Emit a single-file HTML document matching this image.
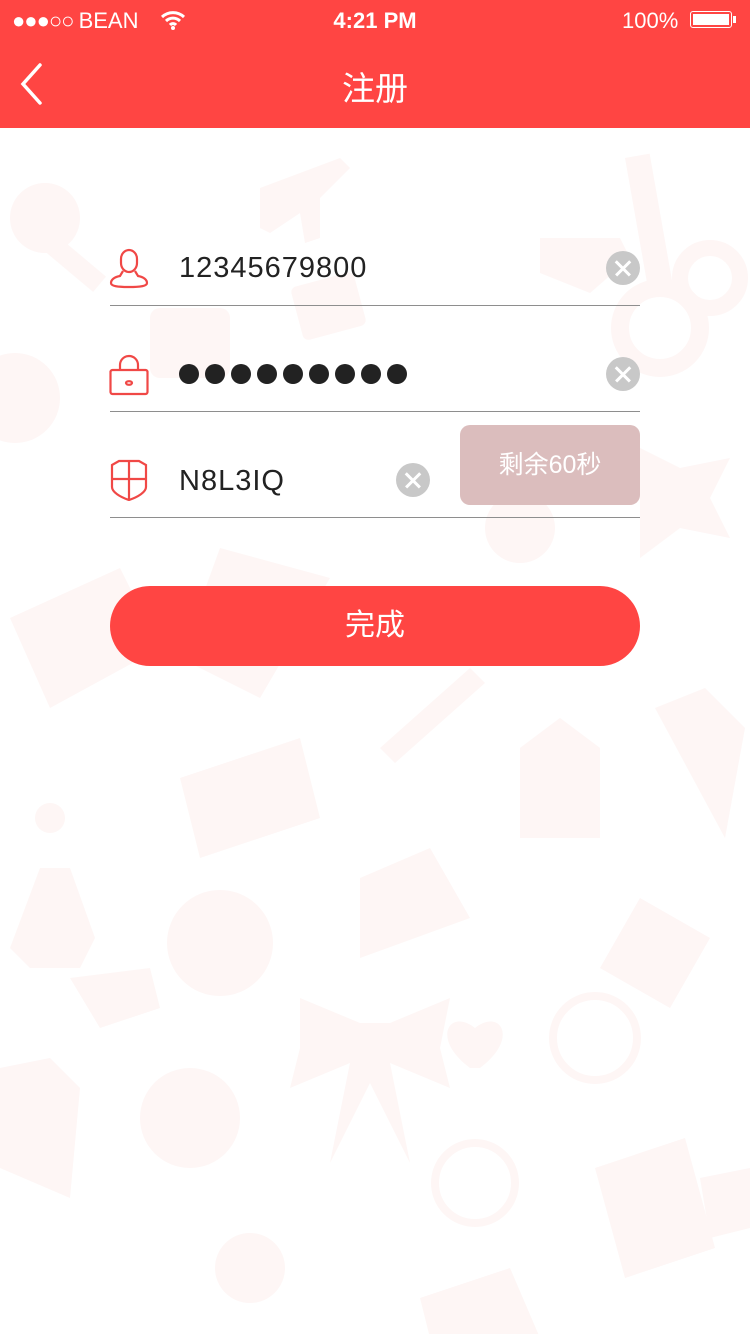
<!DOCTYPE html>
<html><head><meta charset="utf-8"><style>
body{margin:0;width:750px;height:1334px;overflow:hidden;background:#fff;font-family:"Liberation Sans","Noto Sans CJK SC",sans-serif;position:relative}
.hdr{position:absolute;left:0;top:0;width:750px;height:128px;background:#ff4543;color:#fff}
.bg{position:absolute;left:0;top:128px}
.line{position:absolute;left:110px;width:530px;height:1px;background:#8e8e8e}
.txt{position:absolute;font-size:29px;color:#222;letter-spacing:1px}
.clr{position:absolute;width:34px;height:34px;border-radius:50%;background:#c8c8c8}
.clr:before,.clr:after{content:"";position:absolute;left:7px;top:16px;width:20px;height:2.5px;background:#fff;transform:rotate(45deg)}
.clr:after{transform:rotate(-45deg)}
</style></head><body>
<svg class="bg" width="750" height="1206" fill="#fef6f5">
<circle cx="45" cy="90" r="35"/><rect x="60" y="110" width="60" height="20" transform="rotate(40 60 110)"/>
<path d="M260 60l80-30 10 10-30 30 0 40-15 5-5-30-30 20-10-5z"/>
<path d="M540 110h80l10 20-40 35-50-20z"/><circle cx="660" cy="200" r="40" fill="none" stroke="#fef6f5" stroke-width="18"/><circle cx="710" cy="150" r="30" fill="none" stroke="#fef6f5" stroke-width="16"/>
<rect x="625" y="30" width="25" height="140" transform="rotate(-10 625 30)"/>
<circle cx="15" cy="270" r="45"/><rect x="150" y="180" width="80" height="70" rx="10"/>
<rect x="290" y="160" width="65" height="55" rx="6" transform="rotate(-15 290 160)"/>
<path d="M640 320l40 20 50-10-20 40 20 40-50-10-40 30 0-50z"/>
<circle cx="520" cy="400" r="35"/><path d="M220 420l110 30-70 120-80-40z"/>
<path d="M10 490l110-50 40 80-110 60z"/><path d="M380 620l90-80 15 15-90 80z"/>
<path d="M520 620l40-30 40 30v90h-80z"/>
<path d="M655 580l50-20 40 40-20 110z"/>
<path d="M180 650l120-40 20 80-120 40z"/>
<circle cx="50" cy="690" r="15"/><path d="M10 820l30-80 30 0 25 70-15 30-50 0z"/>
<path d="M360 750l70-30 40 70-110 40z"/>
<path d="M600 840l40-70 70 40-40 70z"/>
<circle cx="220" cy="815" r="53"/><path d="M470 940c-40-30-20-60 5-40 25-20 45 10 5 40z"/>
<path d="M70 850l80-10 10 40-60 20z"/>
<path d="M300 870l60 25 30 0 60-25-10 50 10 40-60-25 20 100-40-80-40 80 20-100-60 25 10-40z"/>
<circle cx="595" cy="910" r="42" fill="none" stroke="#fef6f5" stroke-width="8"/>
<path d="M0 940l50-10 30 30-10 110-70-30z"/>
<circle cx="190" cy="990" r="50"/>
<circle cx="475" cy="1055" r="40" fill="none" stroke="#fef6f5" stroke-width="8"/>
<path d="M595 1040l90-30 30 110-90 30z"/><path d="M700 1050l50-10v60l-40 10z"/>
<circle cx="250" cy="1140" r="35"/><path d="M420 1170l90-30 30 70h-110z"/>
</svg>
<div class="hdr">
<div style="position:absolute;left:12px;top:8px;font-size:22px;letter-spacing:-1px">●●●○○ <span style="letter-spacing:0">BEAN</span></div>
<svg style="position:absolute;left:160px;top:10px" width="26" height="20"><path d="M2 7a16 16 0 0 1 22 0M6 11a10 10 0 0 1 14 0M10 15a4 4 0 0 1 6 0" stroke="#fff" stroke-width="3" fill="none"/><circle cx="13" cy="18" r="2" fill="#fff"/></svg>
<div style="position:absolute;left:0;width:750px;top:8px;text-align:center;font-size:22px;font-weight:bold">4:21 PM</div>
<div style="position:absolute;left:622px;top:8px;font-size:22px">100%</div>
<div style="position:absolute;left:690px;top:11px;width:42px;height:17px;border:1.5px solid #fff;border-radius:3px;box-sizing:border-box;padding:2px"><div style="background:#fff;height:100%"></div></div>
<div style="position:absolute;left:733px;top:16px;width:3px;height:7px;background:#fff"></div>
<svg style="position:absolute;left:18px;top:62px" width="26" height="44"><path d="M22 3L5 22l17 19" stroke="#fff" stroke-width="3.5" fill="none" stroke-linecap="round"/></svg>
<div style="position:absolute;left:0;width:750px;top:62px;text-align:center;font-size:33px">注册</div>
</div>

<svg style="position:absolute;left:109px;top:247px" width="40" height="42" fill="none" stroke="#f04846" stroke-width="2.2"><path d="M12 12a8 9 0 0 1 16 0v4a8 9 0 0 1-16 0z"/><path d="M14 24l-3 5C5 30 2 33 2 36s6 4 18 4 18-1 18-4-3-6-9-7l-3-5"/></svg>
<div class="txt" style="left:179px;top:252px">12345679800</div>
<div class="clr" style="left:606px;top:251px"></div>
<div class="line" style="top:305px"></div>

<svg style="position:absolute;left:109px;top:354px" width="40" height="42" fill="none" stroke="#f04846" stroke-width="2.2"><path d="M11 16v-5a9 9 0 0 1 18 0v5"/><rect x="1.5" y="16" width="37" height="24" rx="2"/><ellipse cx="20" cy="29" rx="3" ry="1.8"/></svg>
<div style="position:absolute;left:179px;top:363px">
<svg width="232" height="22" fill="#222"><g><circle cx="10" cy="11" r="10"/><circle cx="36" cy="11" r="10"/><circle cx="62" cy="11" r="10"/><circle cx="88" cy="11" r="10"/><circle cx="114" cy="11" r="10"/><circle cx="140" cy="11" r="10"/><circle cx="166" cy="11" r="10"/><circle cx="192" cy="11" r="10"/><circle cx="218" cy="11" r="10"/></g></svg></div>
<div class="clr" style="left:606px;top:357px"></div>
<div class="line" style="top:411px"></div>

<svg style="position:absolute;left:110px;top:459px" width="38" height="42" fill="none" stroke="#f04846" stroke-width="2.2"><path d="M2 6l7-4h20l7 4v22c0 5-8 10-17 13C10 38 2 33 2 28z"/><path d="M19 2v39M2 20h34"/></svg>
<div class="txt" style="left:179px;top:465px;letter-spacing:1px">N8L3IQ</div>
<div class="clr" style="left:396px;top:463px"></div>
<div style="position:absolute;left:460px;top:425px;width:180px;height:80px;border-radius:10px;background:#dbbdbd;color:#fff;font-size:25px;text-align:center;line-height:80px">剩余60秒</div>
<div class="line" style="top:517px"></div>

<div style="position:absolute;left:110px;top:586px;width:530px;height:80px;border-radius:40px;background:#ff4543;color:#fff;font-size:30px;text-align:center;line-height:80px">完成</div>
</body></html>
